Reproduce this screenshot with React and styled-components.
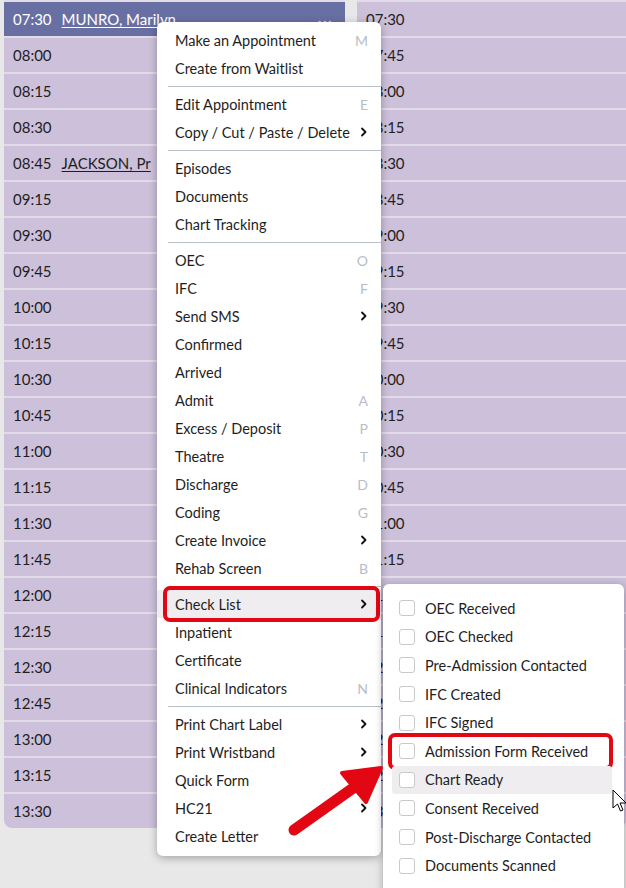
import styled, { createGlobalStyle } from "styled-components";

const GlobalStyle = createGlobalStyle`
	html, body {
		margin: 0;
		padding: 0;
		background: #e8e8e8;
	}
	body {
		font-family: Lato, "Noto Sans", sans-serif;
	}
`;

const leftRows = [
	{ time: "07:30", name: "MUNRO, Marilyn", booked: true },
	{ time: "08:00" },
	{ time: "08:15" },
	{ time: "08:30" },
	{ time: "08:45", name: "JACKSON, Pr" },
	{ time: "09:15" },
	{ time: "09:30" },
	{ time: "09:45" },
	{ time: "10:00" },
	{ time: "10:15" },
	{ time: "10:30" },
	{ time: "10:45" },
	{ time: "11:00" },
	{ time: "11:15" },
	{ time: "11:30" },
	{ time: "11:45" },
	{ time: "12:00" },
	{ time: "12:15" },
	{ time: "12:30" },
	{ time: "12:45" },
	{ time: "13:00" },
	{ time: "13:15" },
	{ time: "13:30" },
];

const rightRows = [
	"07:30", "07:45", "08:00", "08:15", "08:30", "08:45", "09:00", "09:15",
	"09:30", "09:45", "10:00", "10:15", "10:30", "10:45", "11:00", "11:15",
	"11:30", "11:45", "12:00", "12:15", "12:30", "12:45", "13:00",
];

// null = separator
const menuItems = [
	{ label: "Make an Appointment", key: "M" },
	{ label: "Create from Waitlist" },
	null,
	{ label: "Edit Appointment", key: "E" },
	{ label: "Copy / Cut / Paste / Delete", sub: true },
	null,
	{ label: "Episodes" },
	{ label: "Documents" },
	{ label: "Chart Tracking" },
	null,
	{ label: "OEC", key: "O" },
	{ label: "IFC", key: "F" },
	{ label: "Send SMS", sub: true },
	{ label: "Confirmed" },
	{ label: "Arrived" },
	{ label: "Admit", key: "A" },
	{ label: "Excess / Deposit", key: "P" },
	{ label: "Theatre", key: "T" },
	{ label: "Discharge", key: "D" },
	{ label: "Coding", key: "G" },
	{ label: "Create Invoice", sub: true },
	{ label: "Rehab Screen", key: "B" },
	null,
	{ label: "Check List", sub: true, active: true },
	{ label: "Inpatient" },
	{ label: "Certificate" },
	{ label: "Clinical Indicators", key: "N" },
	null,
	{ label: "Print Chart Label", sub: true },
	{ label: "Print Wristband", sub: true },
	{ label: "Quick Form" },
	{ label: "HC21", sub: true },
	{ label: "Create Letter" },
];

const checkItems = [
	{ label: "OEC Received" },
	{ label: "OEC Checked" },
	{ label: "Pre-Admission Contacted" },
	{ label: "IFC Created" },
	{ label: "IFC Signed" },
	{ label: "Admission Form Received", marked: true },
	{ label: "Chart Ready", hover: true },
	{ label: "Consent Received" },
	{ label: "Post-Discharge Contacted" },
	{ label: "Documents Scanned" },
];

function Chevron()
{
	return (
		<svg width="8" height="10" viewBox="0 0 8 10">
			<path d="M2 1.5 L5.5 5 L2 8.5" fill="none" stroke="#111" strokeWidth="1.8" strokeLinecap="round" strokeLinejoin="round" />
		</svg>
	);
}

export default function App()
{
	return (
		<Page>
			<GlobalStyle />
			<Columns>
				<Column>
					{leftRows.map((r) => (
						<Slot key={r.time} booked={r.booked}>
							<Time>{r.time}</Time>
							{r.name && <Patient>{r.name}</Patient>}
							{r.booked && <More>···</More>}
						</Slot>
					))}
				</Column>
				<Column>
					{rightRows.map((t) => (
						<Slot key={t}>
							<Time>{t}</Time>
						</Slot>
					))}
				</Column>
			</Columns>

			<Menu>
				{menuItems.map((item, i) =>
					item === null ? (
						<Separator key={"sep" + i} />
					) : (
						<MenuItem key={item.label} active={item.active}>
							<span>{item.label}</span>
							{item.key && <Shortcut>{item.key}</Shortcut>}
							{item.sub && <Chevron />}
						</MenuItem>
					)
				)}
			</Menu>

			<SubMenu>
				{checkItems.map((c) => (
					<CheckRow key={c.label} marked={c.marked} hover={c.hover}>
						<Box />
						<span>{c.label}</span>
					</CheckRow>
				))}
			</SubMenu>

			<Arrow width="120" height="90" viewBox="0 0 120 90">
				<line x1="12" y1="80" x2="74" y2="36" stroke="#e30613" strokeWidth="11" strokeLinecap="round" />
				<polygon points="99,18 60,23 84,52" fill="#e30613" stroke="#e30613" strokeWidth="4" strokeLinejoin="round" />
			</Arrow>

			<Cursor width="16" height="26" viewBox="0 0 16 26">
				<path d="M1 1 L1 19 L5.5 15 L8.5 22 L11 21 L8 14 L14 14 Z" fill="#fff" stroke="#000" strokeWidth="1" strokeLinejoin="round" />
			</Cursor>
		</Page>
	);
}

const Page = styled.div`
	position: relative;
	width: 626px;
	height: 888px;
	overflow: hidden;
	background: #e8e8e8;
	font-family: Lato, "Noto Sans", sans-serif;
	font-size: 14.5px;
	color: #1e1e1e;
`;

const Columns = styled.div`
	display: grid;
	grid-template-columns: 341px 1fr;
	gap: 12px;
	padding-left: 4px;
	align-items: start;
`;

const Column = styled.div`
	background: #cdc0da;
	border-top: 2px solid #e2dce9;
	border-radius: 0 0 8px 8px;
	overflow: hidden;
`;

const Slot = styled.div`
	position: relative;
	display: flex;
	align-items: center;
	gap: 10px;
	height: 34px;
	padding-left: 9px;
	background: ${(p) => (p.booked ? "#6870a3" : "transparent")};
	color: ${(p) => (p.booked ? "#fff" : "#1e1e1e")};
	border-bottom: 2px solid #e2dce9;

	&:last-child {
		border-bottom: none;
	}
`;

const Time = styled.span`
	font-size: 15px;
`;

const Patient = styled.span`
	text-decoration: underline;
	text-underline-offset: 2px;
	font-size: 15px;
`;

const More = styled.span`
	margin-left: auto;
	margin-right: 12px;
	color: #c8cbe0;
	font-size: 16px;
	letter-spacing: 1px;
`;

const Menu = styled.div`
	position: absolute;
	left: 157px;
	top: 22px;
	width: 224px;
	padding: 4px 0 6px;
	background: #fff;
	border-radius: 6px;
	box-shadow: 0 2px 8px rgba(0, 0, 0, 0.3);
`;

const MenuItem = styled.div`
	position: relative;
	display: flex;
	align-items: center;
	gap: 8px;
	height: 28px;
	padding: 0 13px 0 18px;
	background: ${(p) => (p.active ? "#efedef" : "transparent")};

	span:first-child {
		flex: 1;
	}

	&::after {
		content: "";
		display: ${(p) => (p.active ? "block" : "none")};
		position: absolute;
		left: 6px;
		right: 1px;
		top: -4px;
		bottom: -4px;
		border: 4px solid #e30613;
		border-radius: 7px;
	}
`;

const Shortcut = styled.span`
	color: #b6bec7;
	font-size: 14px;
`;

const Separator = styled.div`
	height: 1px;
	margin: 4px 0 3px 11px;
	background: #b9bfc6;
`;

const SubMenu = styled.div`
	position: absolute;
	left: 383px;
	top: 584px;
	width: 241px;
	height: 320px;
	padding: 10px 12px 0 9px;
	box-sizing: border-box;
	background: #fff;
	border-radius: 6px;
	box-shadow: 0 2px 8px rgba(0, 0, 0, 0.3);
`;

const CheckRow = styled.div`
	position: relative;
	display: flex;
	align-items: center;
	gap: 10px;
	height: 28.6px;
	padding-left: 7px;
	border-radius: 3px;
	background: ${(p) => (p.hover ? "#efedef" : "transparent")};

	&::after {
		content: "";
		display: ${(p) => (p.marked ? "block" : "none")};
		position: absolute;
		left: -4px;
		right: -1px;
		top: -4px;
		bottom: -4px;
		border: 4px solid #e30613;
		border-radius: 7px;
	}
`;

const Box = styled.span`
	width: 14px;
	height: 14px;
	border: 1px solid #c9c9c9;
	border-radius: 3px;
	background: #fff;
	flex-shrink: 0;
`;

const Arrow = styled.svg`
	position: absolute;
	left: 282px;
	top: 750px;
`;

const Cursor = styled.svg`
	position: absolute;
	left: 612px;
	top: 789px;
`;
